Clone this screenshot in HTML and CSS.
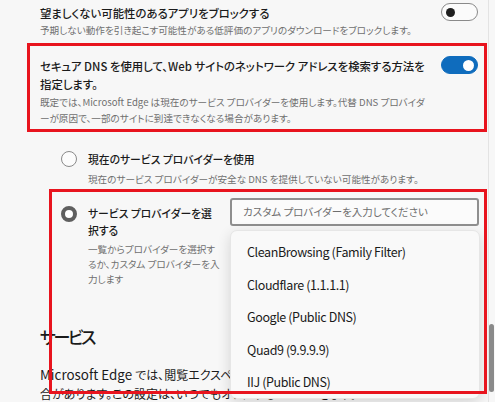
FILE: index.html
```html
<!DOCTYPE html>
<html lang="ja">
<head>
<meta charset="utf-8">
<title>プライバシー設定</title>
<link rel="stylesheet" href="styles.css">
</head>
<body>
<div class="window">
  <main class="content">
    <section class="setting first">
      <div class="setting-text">
        <div class="title">望ましくない可能性のあるアプリをブロックする</div>
        <div class="desc">予期しない動作を引き起こす可能性がある低評価のアプリのダウンロードをブロックします。</div>
      </div>
      <span class="toggle"><span class="knob"></span></span>
    </section>

    <section class="setting dns">
      <div class="setting-text">
        <div class="title">セキュア DNS を使用して、Web サイトのネットワーク アドレスを検索する方法を<br>指定します。</div>
        <div class="desc dns-desc">既定では、Microsoft Edge は現在のサービス プロバイダーを使用します。代替 DNS プロバイダ<br>ーが原因で、一部のサイトに到達できなくなる場合があります。</div>
      </div>
      <span class="toggle on"><span class="knob"></span></span>
    </section>

    <div class="options">
      <div class="option current">
        <span class="radio"></span>
        <div class="option-text">
          <div class="option-title">現在のサービス プロバイダーを使用</div>
          <div class="option-desc">現在のサービス プロバイダーが安全な DNS を提供していない可能性があります。</div>
        </div>
      </div>

      <div class="option custom">
        <span class="radio checked"></span>
        <div class="option-text narrow">
          <div class="option-title">サービス プロバイダーを選<br>択する</div>
          <div class="option-desc small">一覧からプロバイダーを選択す<br>るか、カスタム プロバイダーを入<br>力します</div>
        </div>
        <div class="picker">
          <div class="input">カスタム プロバイダーを入力してください</div>
          <ul class="menu">
            <li>CleanBrowsing (Family Filter)</li>
            <li>Cloudflare (1.1.1.1)</li>
            <li>Google (Public DNS)</li>
            <li>Quad9 (9.9.9.9)</li>
            <li>IIJ (Public DNS)</li>
          </ul>
        </div>
      </div>
    </div>

    <h2 class="section-title">サービス</h2>
    <p class="para">Microsoft Edge <span class="jp">では、閲覧エクスペリエンスを向上させるために Web サービスを使用する場</span><br><span class="jp">合があります。この設定は、いつでもオフにすることができます。</span></p>
  </main>

  <div class="scrollbar"><div class="thumb"></div></div>

  <div class="mark mark-dns"></div>
  <div class="mark mark-custom"></div>
</div>
</body>
</html>
```

FILE: styles.css
```css
* {
  box-sizing: border-box;
}

html, body {
  margin: 0;
  padding: 0;
}

body {
  background: #f7f7f7;
  font-family: "Noto Sans CJK JP", sans-serif;
  font-feature-settings: "palt";
  color: #1b1b1b;
}

.window {
  position: relative;
  display: flex;
  width: 495px;
  height: 402px;
  overflow: hidden;
}

.content {
  flex: 1;
  min-width: 0;
  padding: 4px 10px 0 40px;
}

/* settings rows */
.setting {
  display: flex;
  justify-content: space-between;
  align-items: flex-start;
}

.setting-text {
  flex: 1;
  min-width: 0;
}

.setting.dns {
  margin-top: 18px;
}

.title {
  font-size: 11.4px;
  line-height: 18px;
  font-weight: 500;
  color: #1b1b1b;
  white-space: nowrap;
}

.desc {
  font-size: 9.6px;
  line-height: 17px;
  color: #6f6f6f;
  white-space: nowrap;
}

.dns-desc {
  margin-top: 1px;
  line-height: 16px;
}

.toggle {
  position: relative;
  flex-shrink: 0;
  width: 37px;
  height: 18px;
  margin-top: -1px;
  border: 1px solid #8a8a8a;
  border-radius: 9px;
  background: #fbfbfb;
  display: flex;
  align-items: center;
  padding: 0 4px;
}

.toggle .knob {
  width: 9px;
  height: 9px;
  border-radius: 50%;
  background: #1f1f1f;
}

.toggle.on {
  background: #0f6cbd;
  border-color: #0f6cbd;
  justify-content: flex-end;
  padding: 0 3px;
}

.toggle.on .knob {
  width: 11px;
  height: 11px;
  background: #ffffff;
}

/* radio options */
.options {
  margin-top: 23px;
  padding-left: 21px;
}

.option {
  display: flex;
  align-items: flex-start;
}

.radio {
  flex-shrink: 0;
  width: 16px;
  height: 16px;
  margin-top: 2px;
  border: 1px solid #8a8a8a;
  border-radius: 50%;
  background: #fcfcfc;
}

.radio.checked {
  border: 4.5px solid #5f5f5f;
  background: #ffffff;
  margin-top: 8px;
}

.option-text {
  margin-left: 11px;
  white-space: nowrap;
}

.option-title {
  font-size: 10.8px;
  line-height: 20px;
  font-weight: 500;
  color: #1b1b1b;
}

.option-desc {
  margin-top: 1px;
  font-size: 9.6px;
  line-height: 18px;
  color: #6f6f6f;
}

.option.custom {
  margin-top: 10px;
}

.option-text.narrow {
  width: 127px;
  flex-shrink: 0;
  padding-top: 7px;
}

.narrow .option-title {
  line-height: 17px;
}

.option-desc.small {
  margin-top: 3px;
  line-height: 15px;
}

.picker {
  position: relative;
  flex-shrink: 0;
  width: 249px;
  margin-left: 15px;
}

.input {
  height: 28px;
  border: 2px solid #8f8f8f;
  border-radius: 3px;
  background: #fbfbfb;
  padding-left: 11px;
  font-size: 10.5px;
  line-height: 24px;
  color: #6e6e6e;
  white-space: nowrap;
}

.menu {
  position: absolute;
  top: 32px;
  left: 0;
  width: 250px;
  height: 169px;
  margin: 0;
  padding: 5px 0 0;
  list-style: none;
  background: #f9f9f9;
  border: 1px solid #e6e6e6;
  border-radius: 7px;
  box-shadow: 0 4px 14px rgba(0, 0, 0, 0.14);
}

.menu li {
  height: 32.5px;
  line-height: 32.5px;
  padding-left: 16px;
  font-size: 12.5px;
  letter-spacing: -0.4px;
  color: #1b1b1b;
}

/* services section */
.section-title {
  margin: 36px 0 0;
  font-size: 17px;
  line-height: 28px;
  letter-spacing: -2.4px;
  font-weight: 500;
  color: #1b1b1b;
}

.para {
  margin: 14px 0 0;
  width: 430px;
  overflow: hidden;
  white-space: nowrap;
  font-size: 13.4px;
  line-height: 18px;
  color: #1b1b1b;
}

.para .jp {
  font-size: 12px;
}

/* scrollbar */
.scrollbar {
  position: relative;
  flex-shrink: 0;
  width: 7px;
  border-left: 1px solid #e3e3e3;
  background: #f7f7f7;
}

.thumb {
  position: absolute;
  top: 324px;
  left: 0;
  width: 5px;
  height: 68px;
  border-radius: 3px;
  background: #8a8a8a;
}

/* annotation frames drawn over the screenshot */
.mark {
  position: absolute;
  border: 3px solid #e8141e;
  pointer-events: none;
}

.mark-dns {
  left: 27px;
  top: 43px;
  width: 460px;
  height: 89px;
}

.mark-custom {
  left: 49px;
  top: 189px;
  width: 438px;
  height: 205px;
}
```
